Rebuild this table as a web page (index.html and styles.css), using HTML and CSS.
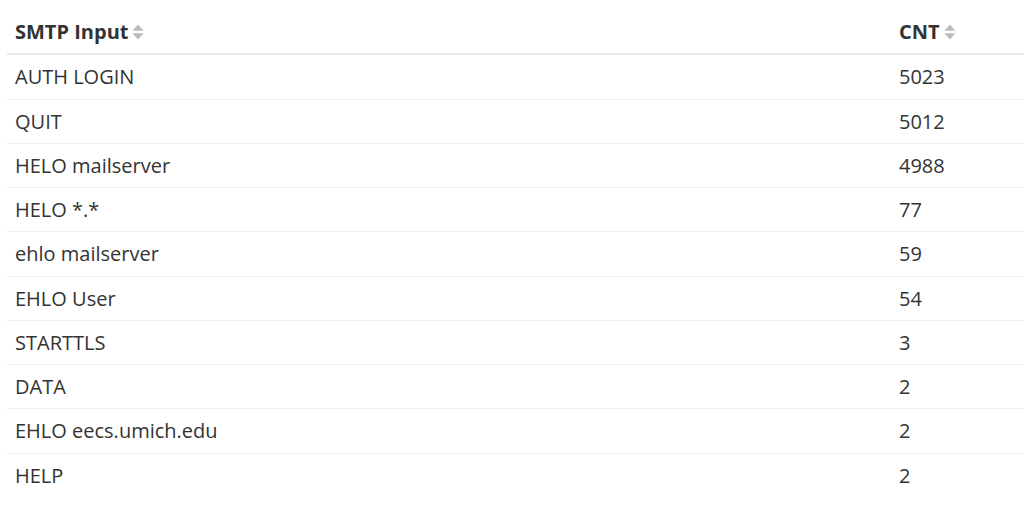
FILE: index.html
```html
<!DOCTYPE html>
<html lang="en">
<head>
    <meta charset="UTF-8">
    <title>SMTP Input</title>
    <link rel="stylesheet" href="styles.css">
</head>
<body>
    <div class="wrap">
        <table class="data">
            <thead>
                <tr>
                    <th class="col-input">SMTP Input<svg class="sort" width="12" height="16" viewBox="0 0 12 16"><path d="M6 0.5 L11.5 6.8 H0.5 Z M6 15.5 L11.5 9.2 H0.5 Z" fill="#b9bcc0"/></svg></th>
                    <th class="col-cnt">CNT<svg class="sort" width="12" height="16" viewBox="0 0 12 16"><path d="M6 0.5 L11.5 6.8 H0.5 Z M6 15.5 L11.5 9.2 H0.5 Z" fill="#b9bcc0"/></svg></th>
                </tr>
            </thead>
            <tbody>
                <tr><td>AUTH LOGIN</td><td>5023</td></tr>
                <tr><td>QUIT</td><td>5012</td></tr>
                <tr><td>HELO mailserver</td><td>4988</td></tr>
                <tr><td>HELO *.*</td><td>77</td></tr>
                <tr><td>ehlo mailserver</td><td>59</td></tr>
                <tr><td>EHLO User</td><td>54</td></tr>
                <tr><td>STARTTLS</td><td>3</td></tr>
                <tr><td>DATA</td><td>2</td></tr>
                <tr><td>EHLO eecs.umich.edu</td><td>2</td></tr>
                <tr><td>HELP</td><td>2</td></tr>
            </tbody>
        </table>
    </div>
</body>
</html>
```

FILE: styles.css
```css
body {
    margin: 0;
    font-family: 'Open Sans', sans-serif;
    color: #333;
    background: #fff;
    overflow: hidden;
}

.wrap {
    padding-left: 7px;
}

.data {
    width: 1017px;
    border-collapse: collapse;
    font-size: 20px;
    line-height: 27.25px;
}

.data th {
    text-align: left;
    font-weight: 700;
    padding: 18px 8px 8px;
    border-bottom: 2px solid #e8ebed;
    white-space: nowrap;
}

.data td {
    padding: 8px;
    border-top: 1px solid #eceeef;
}

.data tbody tr:first-child td {
    border-top: none;
}

.col-cnt {
    width: 117px;
}

.sort {
    margin-left: 4px;
    vertical-align: -1px;
}
```
